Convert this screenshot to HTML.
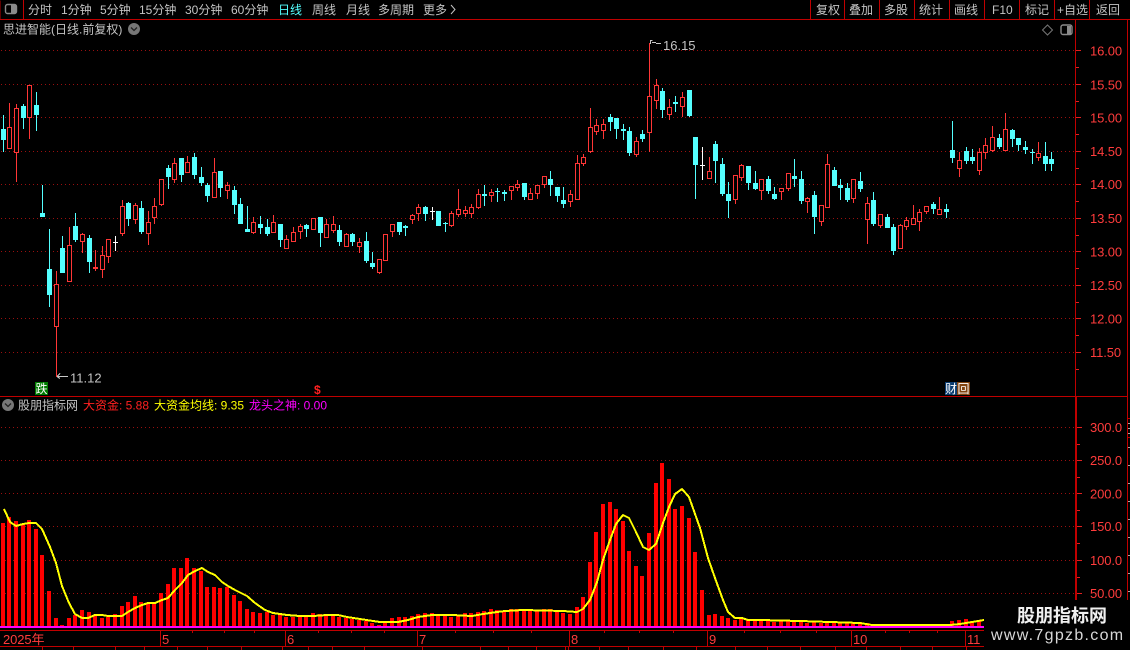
<!DOCTYPE html>
<html lang="zh"><head><meta charset="utf-8"><title>K线</title>
<style>
html,body{margin:0;padding:0;background:#000;width:1130px;height:650px;overflow:hidden}
svg{display:block}
text{font-family:"Liberation Sans","WenQuanYi Zen Hei","Noto Sans CJK SC",sans-serif;font-size:12px}
.t{fill:#c4c4c4}
.p{fill:#ff3c3c;font-size:13px;letter-spacing:-.1px}
</style></head><body>
<svg width="1130" height="650" viewBox="0 0 1130 650" xmlns="http://www.w3.org/2000/svg">
<rect width="1130" height="650" fill="#000"/>
<!-- grid -->
<g stroke="#9a0f0f" stroke-width="1" stroke-dasharray="1 3" fill="none" shape-rendering="crispEdges">
<path d="M1 50.5H1075M1 84.5H1075M1 117.5H1075M1 151.5H1075M1 184.5H1075M1 218.5H1075M1 251.5H1075M1 285.5H1075M1 318.5H1075M1 352.5H1075M1 427.5H1075M1 460.5H1075M1 493.5H1075M1 526.5H1075M1 560.5H1075M1 593.5H1075"/>
</g>
<!-- frame lines -->
<g stroke="#c00000" fill="none" shape-rendering="crispEdges">
<path d="M0 19.5H1130M23.5 0V19M0 .5V19M810.5 0V19M844.5 0V19M879.5 0V19M914.5 0V19M949.5 0V19M984.5 0V19M1019.5 0V19M1054.5 0V19M1089.5 0V19"/>
<path d="M1075.5 19V397M0 396.5H1127M1127.5 19V600"/>
<path stroke-width="2" d="M1076 397V600"/>
<path d="M0 630.5H984M0 646.5H984M160.5 630V646M285.5 630V646M417.5 630V646M569.5 630V646M707.5 630V646M851.5 630V646M965.5 630V646"/>
<path d="M192.5 630V633M224.5 630V633M254.5 630V633M318.5 630V633M351.5 630V633M384.5 630V633M455.5 630V633M493.5 630V633M531.5 630V633M604.5 630V633M639.5 630V633M673.5 630V633M744.5 630V633M780.5 630V633M816.5 630V633M885.5 630V633M909.5 630V633M937.5 630V633"/>
<path d="M42.5 646V650M73.5 646V650M115.5 646V650M144.5 646V650M177.5 646V650M207.5 646V650M241.5 646V650M282.5 646V650M308.5 646V650M332.5 646V650M364.5 646V650M422.5 646V650M480.5 646V650M508.5 646V650M536.5 646V650M565.5 646V650M568.5 646V650M599.5 646V650M628.5 646V650M663.5 646V650M696.5 646V650M735.5 646V650M767.5 646V650M800.5 646V650M835.5 646V650M866.5 646V650M900.5 646V650M932.5 646V650M966.5 646V650"/>
<path stroke="#e02020" d="M1076 50.5H1081M1076 84.5H1081M1076 117.5H1081M1076 151.5H1081M1076 184.5H1081M1076 218.5H1081M1076 251.5H1081M1076 285.5H1081M1076 318.5H1081M1076 352.5H1081M1076 67.5H1079M1076 101.5H1079M1076 134.5H1079M1076 168.5H1079M1076 201.5H1079M1076 235.5H1079M1076 268.5H1079M1076 302.5H1079M1076 335.5H1079M1076 369.5H1079M1077 427.5H1082M1077 460.5H1082M1077 493.5H1082M1077 526.5H1082M1077 560.5H1082M1077 593.5H1082M1077 444.5H1080M1077 477.5H1080M1077 510.5H1080M1077 543.5H1080M1077 577.5H1080"/>
<path d="M1127 418.5H1130M1127 437.5H1130"/>
</g>
<path d="M1128 423.5h2M1128 428.5h2M1128 433.5h2M1128 447.5h2M1128 465.5h2M1128 483.5h2M1128 501.5h2M1128 519.5h2M1128 537.5h2M1128 555.5h2M1128 573.5h2M1128 591.5h2" stroke="#aaa" shape-rendering="crispEdges"/>

<!-- red wicks -->
<path stroke="#ff3636" fill="none" shape-rendering="crispEdges" d="M9.5 103V148M16.5 104V182M29.5 85V139M56.5 271V377M69.5 227V281M82.5 233V253M95.5 250V271M102.5 246V278M108.5 239V263M122.5 200V236M135.5 203V224M148.5 211V245M154.5 198V224M161.5 179V206M174.5 158V183M187.5 156V172M214.5 158V197M227.5 182V199M253.5 217V234M273.5 215V233M286.5 235V248M293.5 227V241M300.5 224V239M313.5 218V229M326.5 219V237M333.5 216V233M346.5 233V247M359.5 238V253M379.5 259V274M385.5 234V260M392.5 224V237M412.5 214V224M418.5 204V221M451.5 211V227M458.5 189V217M465.5 206V217M471.5 204V218M478.5 189V209M491.5 189V202M511.5 186V200M517.5 180V191M530.5 188V199M537.5 185V199M544.5 176V188M570.5 190V207M577.5 155V200M583.5 154V166M590.5 108V153M596.5 119V135M603.5 119V139M636.5 137V157M649.5 43V152M656.5 79V109M669.5 99V120M682.5 92V117M709.5 157V178M735.5 175V204M741.5 164V181M761.5 179V200M781.5 188V200M788.5 173V191M807.5 197V213M821.5 205V226M827.5 154V207M853.5 179V203M867.5 197V244M880.5 214V228M900.5 224V248M906.5 217V230M913.5 205V224M919.5 209V231M926.5 206V214M939.5 197V214M959.5 152V177M979.5 148V175M985.5 138V159M992.5 126V152M1005.5 113V150M1038.5 142V161"/>
<!-- red bodies -->
<path stroke="#ff3636" fill="#000" shape-rendering="crispEdges" d="M7.5 127.5h4V148.5h-4zM14.5 108.5h4V152.5h-4zM27.5 85.5h4V117.5h-4zM54.5 284.5h4V326.5h-4zM67.5 245.5h4V281.5h-4zM80.5 234.5h4V241.5h-4zM93.5 267.5h4V268.5h-4zM100.5 255.5h4V269.5h-4zM106.5 239.5h4V256.5h-4zM120.5 206.5h4V233.5h-4zM133.5 205.5h4V219.5h-4zM146.5 222.5h4V233.5h-4zM152.5 206.5h4V217.5h-4zM159.5 179.5h4V204.5h-4zM172.5 163.5h4V179.5h-4zM185.5 162.5h4V172.5h-4zM212.5 172.5h4V197.5h-4zM225.5 185.5h4V190.5h-4zM251.5 222.5h4V232.5h-4zM271.5 222.5h4V232.5h-4zM284.5 239.5h4V248.5h-4zM291.5 232.5h4V241.5h-4zM298.5 226.5h4V231.5h-4zM311.5 218.5h4V229.5h-4zM324.5 224.5h4V237.5h-4zM331.5 224.5h4V230.5h-4zM344.5 234.5h4V246.5h-4zM357.5 242.5h4V246.5h-4zM377.5 259.5h4V272.5h-4zM383.5 234.5h4V260.5h-4zM390.5 224.5h4V231.5h-4zM410.5 215.5h4V219.5h-4zM416.5 207.5h4V213.5h-4zM449.5 213.5h4V225.5h-4zM456.5 209.5h4V214.5h-4zM463.5 210.5h4V213.5h-4zM469.5 207.5h4V213.5h-4zM476.5 194.5h4V207.5h-4zM489.5 192.5h4V195.5h-4zM509.5 186.5h4V190.5h-4zM515.5 184.5h4V187.5h-4zM528.5 193.5h4V199.5h-4zM535.5 185.5h4V193.5h-4zM542.5 176.5h4V184.5h-4zM568.5 194.5h4V201.5h-4zM575.5 163.5h4V199.5h-4zM581.5 157.5h4V163.5h-4zM588.5 127.5h4V151.5h-4zM594.5 125.5h4V131.5h-4zM601.5 124.5h4V130.5h-4zM634.5 141.5h4V154.5h-4zM647.5 96.5h4V132.5h-4zM654.5 85.5h4V100.5h-4zM667.5 107.5h4V114.5h-4zM680.5 97.5h4V106.5h-4zM707.5 171.5h4V178.5h-4zM733.5 175.5h4V199.5h-4zM739.5 165.5h4V177.5h-4zM759.5 179.5h4V190.5h-4zM779.5 188.5h4V191.5h-4zM786.5 173.5h4V188.5h-4zM805.5 198.5h4V201.5h-4zM819.5 205.5h4V221.5h-4zM825.5 164.5h4V207.5h-4zM851.5 179.5h4V198.5h-4zM865.5 203.5h4V219.5h-4zM878.5 214.5h4V225.5h-4zM898.5 225.5h4V248.5h-4zM904.5 220.5h4V226.5h-4zM911.5 218.5h4V224.5h-4zM917.5 212.5h4V221.5h-4zM924.5 206.5h4V211.5h-4zM937.5 209.5h4V214.5h-4zM957.5 160.5h4V168.5h-4zM977.5 152.5h4V170.5h-4zM983.5 145.5h4V152.5h-4zM990.5 137.5h4V150.5h-4zM1003.5 129.5h4V150.5h-4zM1036.5 153.5h4V157.5h-4z"/>
<!-- cyan wicks -->
<path stroke="#54ffff" fill="none" shape-rendering="crispEdges" d="M3.5 115V152M23.5 104V129M36.5 92V131M42.5 185V217M49.5 229V307M62.5 236V273M75.5 213V242M89.5 235V273M128.5 202V226M141.5 201V234M168.5 165V189M181.5 158V182M194.5 153V179M201.5 167V186M207.5 183V202M220.5 171V197M234.5 186V214M240.5 198V224M247.5 206V232M260.5 216V234M267.5 219V236M280.5 224V247M306.5 224V237M320.5 217V247M339.5 225V246M352.5 233V246M366.5 232V263M372.5 252V269M399.5 222V235M405.5 225V236M425.5 206V221M438.5 211V226M445.5 222V232M484.5 185V206M497.5 188V202M504.5 190V201M524.5 183V200M550.5 171V196M557.5 187V202M563.5 187V208M610.5 114V131M616.5 118V139M623.5 124V140M629.5 127V156M642.5 130V142M662.5 88V118M675.5 96V112M689.5 90V117M695.5 137V199M715.5 141V183M722.5 158V196M728.5 182V218M748.5 166V190M755.5 171V190M768.5 176V194M774.5 187V200M794.5 159V187M801.5 171V204M814.5 191V234M834.5 167V186M840.5 179V200M847.5 183V202M860.5 172V192M873.5 192V226M887.5 214V228M893.5 224V255M933.5 202V214M946.5 204V218M952.5 121V163M966.5 147V164M972.5 149V164M999.5 134V149M1012.5 129V147M1018.5 138V151M1025.5 141V154M1032.5 149V164M1045.5 142V171M1051.5 152V171"/>
<!-- cyan bodies -->
<path fill="#54ffff" shape-rendering="crispEdges" d="M1 129h5V140h-5zM21 106h5V118h-5zM34 105h5V115h-5zM40 213h5V217h-5zM47 269h5V295h-5zM60 248h5V273h-5zM73 226h5V240h-5zM87 238h5V262h-5zM126 203h5V219h-5zM139 208h5V232h-5zM166 168h5V177h-5zM179 158h5V175h-5zM192 157h5V175h-5zM199 177h5V183h-5zM205 185h5V196h-5zM218 171h5V188h-5zM232 190h5V205h-5zM238 204h5V224h-5zM245 229h5V232h-5zM258 224h5V228h-5zM265 227h5V234h-5zM278 224h5V240h-5zM304 225h5V229h-5zM318 217h5V233h-5zM337 230h5V242h-5zM350 234h5V242h-5zM364 241h5V261h-5zM370 263h5V267h-5zM397 222h5V232h-5zM403 226h5V228h-5zM423 207h5V214h-5zM436 211h5V226h-5zM443 223h5V224h-5zM482 194h5V196h-5zM495 191h5V192h-5zM502 192h5V194h-5zM522 183h5V197h-5zM548 179h5V185h-5zM555 187h5V196h-5zM561 200h5V204h-5zM608 117h5V122h-5zM614 118h5V129h-5zM621 129h5V131h-5zM627 131h5V153h-5zM640 134h5V139h-5zM660 91h5V110h-5zM673 102h5V104h-5zM687 90h5V116h-5zM693 137h5V165h-5zM713 144h5V161h-5zM720 164h5V194h-5zM726 194h5V201h-5zM746 166h5V183h-5zM753 183h5V189h-5zM766 179h5V191h-5zM772 194h5V199h-5zM792 176h5V179h-5zM799 179h5V201h-5zM812 195h5V217h-5zM832 170h5V186h-5zM838 185h5V188h-5zM845 188h5V200h-5zM858 181h5V189h-5zM871 200h5V224h-5zM885 217h5V228h-5zM891 227h5V251h-5zM931 204h5V209h-5zM944 209h5V212h-5zM950 150h5V158h-5zM964 151h5V161h-5zM970 157h5V161h-5zM997 138h5V147h-5zM1010 130h5V139h-5zM1016 138h5V145h-5zM1023 147h5V150h-5zM1030 152h5V153h-5zM1043 156h5V164h-5zM1049 159h5V164h-5z"/>
<!-- white doji -->
<path stroke="#fff" fill="none" shape-rendering="crispEdges" d="M115.5 236V251M113 242.5h5M432.5 207V220M430 211.5h5M702.5 147V180M700 165.5h5"/>

<!-- flags -->
<g fill="none" stroke="#c8c8c8" shape-rendering="crispEdges">
<path d="M650.5 40V44M650.5 40.5h2M652 42.5h4M656 43.5h5"/>
<path d="M57 376.5l3-3M57 376.5l3 2M57 376.5H68"/>
</g>
<text x="663" y="50" class="t" style="font-size:13px">16.15</text>
<text x="70" y="382.5" class="t" style="font-size:13px">11.12</text>

<!-- histogram bars -->
<path stroke="#ff0000" stroke-width="4" fill="none" shape-rendering="crispEdges" d="M3 523V627M9 517V627M16 521V627M23 524V627M29 520V627M36 529V627M42 555V627M49 591V627M56 618V627M62 625V627M69 618V627M75 615V627M82 610V627M89 612V627M95 615V627M102 618V627M108 617V627M115 614V627M122 606V627M128 602V627M135 596V627M141 602V627M148 604V627M154 604V627M161 593V627M168 584V627M174 568V627M181 568V627M187 558V627M194 568V627M201 571V627M207 587V627M214 587V627M220 588V627M227 587V627M234 595V627M240 601V627M247 609V627M253 612V627M260 613V627M267 612V627M273 615V627M280 615V627M286 617V627M293 617V627M300 617V627M306 615V627M313 613V627M320 614V627M326 615V627M333 615V627M339 617V627M346 618V627M352 619V627M359 620V627M366 621V627M372 623V627M379 625V627M385 623V627M392 618V627M399 617V627M405 617V627M412 616V627M418 614V627M425 613V627M432 613V627M438 615V627M445 615V627M451 617V627M458 616V627M465 613V627M471 613V627M478 612V627M484 611V627M491 609V627M497 610V627M504 611V627M511 609V627M517 609V627M524 610V627M530 611V627M537 611V627M544 609V627M550 609V627M557 611V627M563 613V627M570 614V627M577 607V627M583 597V627M590 562V627M596 532V627M603 504V627M610 502V627M616 509V627M623 521V627M629 551V627M636 566V627M642 576V627M649 533V627M656 483V627M662 463V627M669 479V627M675 509V627M682 506V627M689 518V627M695 552V627M702 590V627M709 615V627M715 614V627M722 616V627M728 618V627M735 620V627M741 618V627M748 619V627M755 620V627M761 621V627M768 620V627M774 622V627M781 621V627M788 621V627M794 622V627M801 622V627M807 623V627M814 622V627M821 623V627M827 622V627M834 622V627M840 623V627M847 622V627M853 622V627M860 622V627M867 623V627M873 624V627M880 624V627M887 625V627M893 625V627M900 625V627M906 625V627M913 626V627M919 626V627M926 626V627M933 626V627M939 626V627M946 626V627M952 621V627M959 620V627M966 619V627M972 621V627M979 620V627"/>
<!-- magenta line -->
<path stroke="#ff00ff" stroke-width="2" shape-rendering="crispEdges" d="M0 627H984"/>
<!-- yellow MA -->
<polyline fill="none" stroke="#ffff00" stroke-width="2" shape-rendering="crispEdges" points="4,509 10,522 16,526 23,524 29,523 36,523 42,529 50,547 56,563 62,586 69,603 75,614 82,618 88,618 95,615 102,615 108,616 122,616 128,612 135,608 142,605 148,603 155,603 162,600 168,598 175,590 182,583 188,575 195,571 202,568 208,572 215,575 222,582 228,586 235,590 247,596 255,603 265,610 273,613 287,615 300,616 313,616 327,615 338,615 347,617 360,619 373,621 380,622 398,622 408,620 418,617 432,615 452,615 472,616 483,614 497,612 505,611 523,610 563,611 577,612 583,609 590,600 597,582 603,560 610,540 616,524 623,515 629,518 636,532 643,547 649,550 656,544 663,523 669,507 675,494 682,489 689,497 700,528 708,558 715,578 723,600 728,612 735,618 742,618 748,620 760,620 800,621 830,622 860,623 872,625 950,625 960,624 972,622 984,620"/>

<!-- markers -->
<rect x="35" y="382" width="13" height="13" fill="#007c00"/>
<text x="35.5" y="393" style="fill:#fff;font-size:12px">跌</text>
<text x="314" y="394" style="fill:#ff2020;font-size:12px;font-weight:bold">$</text>
<rect x="945" y="382" width="12" height="13" fill="#0a3c70"/>
<rect x="957" y="382" width="13" height="13" fill="#80430f"/>
<text x="945" y="393" style="fill:#fff;font-size:12px">财</text>
<text x="957.5" y="393" style="fill:#fff;font-size:12px">回</text>

<!-- top tabs -->
<g class="t">
<text x="28" y="14" class="t">分时</text>
<text x="61" y="14" class="t">1分钟</text>
<text x="100" y="14" class="t">5分钟</text>
<text x="139" y="14" class="t">15分钟</text>
<text x="185" y="14" class="t">30分钟</text>
<text x="231" y="14" class="t">60分钟</text>
<text x="278" y="14" style="fill:#54ffff">日线</text>
<text x="312" y="14" class="t">周线</text>
<text x="346" y="14" class="t">月线</text>
<text x="378" y="14" class="t">多周期</text>
<text x="423" y="14" class="t">更多</text>
<text x="816" y="14" class="t">复权</text>
<text x="849" y="14" class="t">叠加</text>
<text x="884" y="14" class="t">多股</text>
<text x="919" y="14" class="t">统计</text>
<text x="954" y="14" class="t">画线</text>
<text x="992" y="14" class="t">F10</text>
<text x="1025" y="14" class="t">标记</text>
<text x="1057" y="14" class="t">+自选</text>
<text x="1096" y="14" class="t">返回</text>
</g>
<path d="M451 5l4 4.5-4 4.5" fill="none" stroke="#c4c4c4"/>
<!-- top left icon -->
<rect x="5.5" y="4.5" width="11" height="9" rx="2" fill="#000" stroke="#8a8a8a" stroke-width="1.4"/>
<rect x="11" y="5" width="5" height="8" fill="#8a8a8a"/>
<!-- title -->
<text x="3" y="33.5" class="t">思进智能(日线.前复权)</text>
<circle cx="134" cy="29" r="6" fill="#777"/>
<path d="M131 27.5l3 3 3-3" fill="none" stroke="#222" stroke-width="1.3"/>
<!-- diamond and panel icon -->
<path d="M1047.5 25l5 5-5 5-5-5z" fill="none" stroke="#777"/>
<rect x="1061" y="25" width="11" height="9.5" rx="2" fill="#000" stroke="#8a8a8a" stroke-width="1.4"/>
<rect x="1067" y="26" width="4" height="8" fill="#8a8a8a"/>

<!-- price axis labels -->
<text x="1090" y="55.5" class="p">16.00</text>
<text x="1090" y="89.5" class="p">15.50</text>
<text x="1090" y="122.5" class="p">15.00</text>
<text x="1090" y="156" class="p">14.50</text>
<text x="1090" y="189" class="p">14.00</text>
<text x="1090" y="223" class="p">13.50</text>
<text x="1090" y="256.5" class="p">13.00</text>
<text x="1090" y="290" class="p">12.50</text>
<text x="1090" y="323.5" class="p">12.00</text>
<text x="1090" y="357" class="p">11.50</text>
<text x="1090" y="432" class="p">300.0</text>
<text x="1090" y="465" class="p">250.0</text>
<text x="1090" y="498.5" class="p">200.0</text>
<text x="1090" y="531" class="p">150.0</text>
<text x="1090" y="565" class="p">100.0</text>
<text x="1090" y="598" class="p">50.00</text>

<!-- lower header -->
<circle cx="8" cy="405" r="6" fill="#777"/>
<path d="M5 403.5l3 3 3-3" fill="none" stroke="#222" stroke-width="1.3"/>
<text x="18" y="409.5" class="t">股朋指标网</text>
<text x="83" y="409.5" style="fill:#ff2020">大资金: 5.88</text>
<text x="154" y="409.5" style="fill:#ffff00">大资金均线: 9.35</text>
<text x="249" y="409.5" style="fill:#ff00ff">龙头之神: 0.00</text>

<!-- date labels -->
<g>
<text x="3" y="644" class="p">2025年</text>
<text x="162" y="644" class="p">5</text>
<text x="287" y="644" class="p">6</text>
<text x="419" y="644" class="p">7</text>
<text x="571" y="644" class="p">8</text>
<text x="709" y="644" class="p">9</text>
<text x="853" y="644" class="p">10</text>
<text x="967" y="644" class="p">11</text>
</g>

<!-- watermark -->
<rect x="984" y="600" width="146" height="50" fill="#000"/>
<text x="1017" y="622" style="fill:#f0f0f0;font-size:18px;font-weight:bold">股朋指标网</text>
<text x="991" y="640" style="fill:#d8d8d8;font-size:16px;letter-spacing:1.3px">www.7gpzb.com</text>
</svg>
</body></html>
